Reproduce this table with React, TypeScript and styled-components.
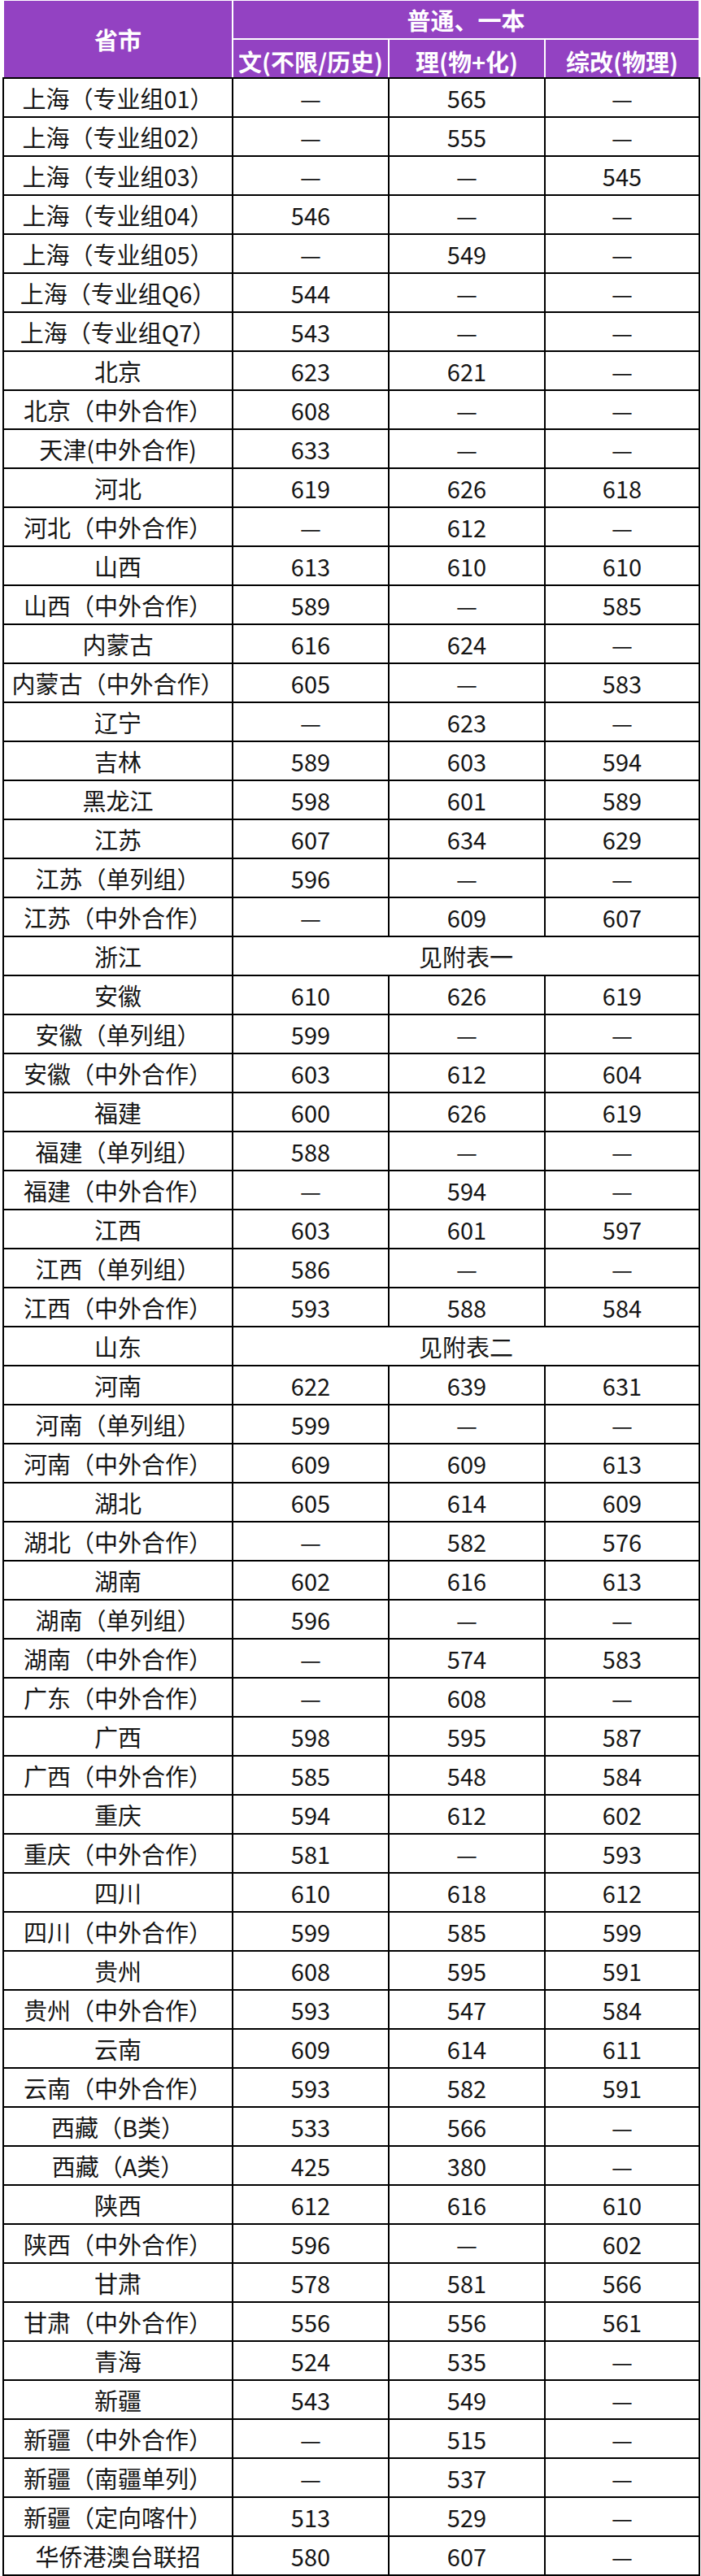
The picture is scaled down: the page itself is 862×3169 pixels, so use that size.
import styled, { createGlobalStyle } from 'styled-components';

const GlobalStyle = createGlobalStyle`
    html, body {
        margin: 0;
        padding: 0;
        background: #ffffff;
    }
    body {
        font-family: "Noto Sans CJK SC", "Noto Sans", sans-serif;
    }
`;

// each row: province, then the three scores; a string in place of the array means the row is merged
type Row = [string, string, string, string] | [string, string];

const D = '—';

const rows: Row[] = [
    ['上海（专业组01）', D, '565', D],
    ['上海（专业组02）', D, '555', D],
    ['上海（专业组03）', D, D, '545'],
    ['上海（专业组04）', '546', D, D],
    ['上海（专业组05）', D, '549', D],
    ['上海（专业组Q6）', '544', D, D],
    ['上海（专业组Q7）', '543', D, D],
    ['北京', '623', '621', D],
    ['北京（中外合作）', '608', D, D],
    ['天津(中外合作)', '633', D, D],
    ['河北', '619', '626', '618'],
    ['河北（中外合作）', D, '612', D],
    ['山西', '613', '610', '610'],
    ['山西（中外合作）', '589', D, '585'],
    ['内蒙古', '616', '624', D],
    ['内蒙古（中外合作）', '605', D, '583'],
    ['辽宁', D, '623', D],
    ['吉林', '589', '603', '594'],
    ['黑龙江', '598', '601', '589'],
    ['江苏', '607', '634', '629'],
    ['江苏（单列组）', '596', D, D],
    ['江苏（中外合作）', D, '609', '607'],
    ['浙江', '见附表一'],
    ['安徽', '610', '626', '619'],
    ['安徽（单列组）', '599', D, D],
    ['安徽（中外合作）', '603', '612', '604'],
    ['福建', '600', '626', '619'],
    ['福建（单列组）', '588', D, D],
    ['福建（中外合作）', D, '594', D],
    ['江西', '603', '601', '597'],
    ['江西（单列组）', '586', D, D],
    ['江西（中外合作）', '593', '588', '584'],
    ['山东', '见附表二'],
    ['河南', '622', '639', '631'],
    ['河南（单列组）', '599', D, D],
    ['河南（中外合作）', '609', '609', '613'],
    ['湖北', '605', '614', '609'],
    ['湖北（中外合作）', D, '582', '576'],
    ['湖南', '602', '616', '613'],
    ['湖南（单列组）', '596', D, D],
    ['湖南（中外合作）', D, '574', '583'],
    ['广东（中外合作）', D, '608', D],
    ['广西', '598', '595', '587'],
    ['广西（中外合作）', '585', '548', '584'],
    ['重庆', '594', '612', '602'],
    ['重庆（中外合作）', '581', D, '593'],
    ['四川', '610', '618', '612'],
    ['四川（中外合作）', '599', '585', '599'],
    ['贵州', '608', '595', '591'],
    ['贵州（中外合作）', '593', '547', '584'],
    ['云南', '609', '614', '611'],
    ['云南（中外合作）', '593', '582', '591'],
    ['西藏（B类）', '533', '566', D],
    ['西藏（A类）', '425', '380', D],
    ['陕西', '612', '616', '610'],
    ['陕西（中外合作）', '596', D, '602'],
    ['甘肃', '578', '581', '566'],
    ['甘肃（中外合作）', '556', '556', '561'],
    ['青海', '524', '535', D],
    ['新疆', '543', '549', D],
    ['新疆（中外合作）', D, '515', D],
    ['新疆（南疆单列）', D, '537', D],
    ['新疆（定向喀什）', '513', '529', D],
    ['华侨港澳台联招', '580', '607', D],
];

const App = () => {
    return (
        <>
            <GlobalStyle />
            <Page>
                <Table>
                    <colgroup>
                        <col style={{ width: 282 }} />
                        <col style={{ width: 192 }} />
                        <col style={{ width: 192 }} />
                        <col style={{ width: 190 }} />
                    </colgroup>
                    <thead>
                        <HeadRow $height={47}>
                            <HeadCell rowSpan={2} $last>
                                省市
                            </HeadCell>
                            <HeadCell colSpan={3}>普通、一本</HeadCell>
                        </HeadRow>
                        <HeadRow $height={48}>
                            <HeadCell $last $sub>
                                文(不限/历史)
                            </HeadCell>
                            <HeadCell $last $sub>
                                理(物+化)
                            </HeadCell>
                            <HeadCell $last $sub>
                                综改(物理)
                            </HeadCell>
                        </HeadRow>
                    </thead>
                    <tbody>
                        {rows.map((row) => (
                            <BodyRow key={row[0]}>
                                <Cell>{row[0]}</Cell>
                                {row.length === 2 ? (
                                    <Cell colSpan={3}>{row[1]}</Cell>
                                ) : (
                                    row
                                        .slice(1)
                                        .map((v, i) => (
                                            <Cell key={i}>{v}</Cell>
                                        ))
                                )}
                            </BodyRow>
                        ))}
                    </tbody>
                </Table>
            </Page>
        </>
    );
};

const Page = styled.div`
    width: 862px;
    padding: 1px 0 0 3px;
    box-sizing: border-box;
`;

const Table = styled.table`
    width: 856px;
    table-layout: fixed;
    border-collapse: collapse;
    border-spacing: 0;
`;

const HeadRow = styled.tr<{ $height: number }>`
    height: ${(p) => p.$height}px;
`;

const HeadCell = styled.th<{ $last?: boolean; $sub?: boolean }>`
    padding: 0;
    background: #9342c2;
    color: #ffffff;
    font-size: 29px;
    font-weight: 700;
    line-height: 1;
    text-align: center;
    vertical-align: middle;
    white-space: nowrap;
    border: 2px solid #ffffff;
    border-top: none;
    border-bottom: 2px solid ${(p) => (p.$last ? '#000000' : '#ffffff')};
    padding-top: ${(p) => (p.$sub ? '6px' : '0')};
`;

const BodyRow = styled.tr`
    height: 48px;
`;

const Cell = styled.td`
    padding: 0;
    border: 2px solid #000000;
    color: #151515;
    font-size: 29px;
    font-weight: 400;
    line-height: 1;
    text-align: center;
    vertical-align: middle;
    white-space: nowrap;
`;

export default App;
